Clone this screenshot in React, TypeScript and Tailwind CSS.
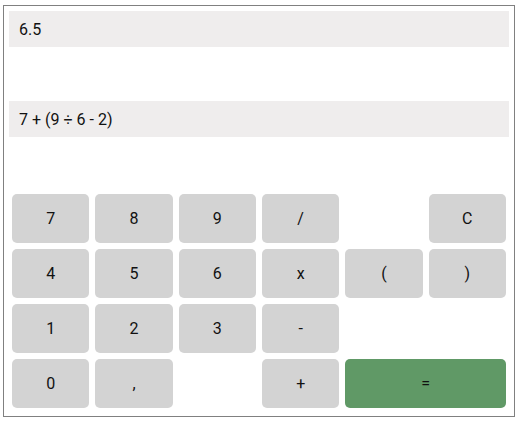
import React from "react";

type Key = { label: string; span?: number; green?: boolean } | null;

const keys: Key[] = [
  { label: "7" }, { label: "8" }, { label: "9" }, { label: "/" }, null, { label: "C" },
  { label: "4" }, { label: "5" }, { label: "6" }, { label: "x" }, { label: "(" }, { label: ")" },
  { label: "1" }, { label: "2" }, { label: "3" }, { label: "-" }, null, null,
  { label: "0" }, { label: "," }, null, { label: "+" }, { label: "=", span: 2, green: true },
];

export default function App() {
  return (
    <div className="pt-[5px] pl-[3px]" style={{ fontFamily: "Roboto, 'Liberation Sans', sans-serif" }}>
      <div className="w-[512px] h-[412px] border border-[#808080] p-[5px] text-[16px] text-[#111]">
        <div className="h-[36px] bg-[#efeded] flex items-center pl-[10px] pt-[2px] mb-[54px]">6.5</div>
        <div className="h-[36px] bg-[#efeded] flex items-center pl-[10px] pt-[2px] mb-[54px]">7 + (9 ÷ 6 - 2)</div>
        <div className="grid grid-cols-6 auto-rows-[55px]">
          {keys.map((k, i) =>
            k === null ? (
              <div key={i} />
            ) : (
              <div
                key={i}
                className={
                  "m-[3px] rounded-[5px] flex items-center justify-center pt-[1px] " +
                  (k.green ? "col-span-2 bg-[#609966]" : "bg-[#d3d3d3]")
                }
              >
                {k.label}
              </div>
            )
          )}
        </div>
      </div>
    </div>
  );
}
